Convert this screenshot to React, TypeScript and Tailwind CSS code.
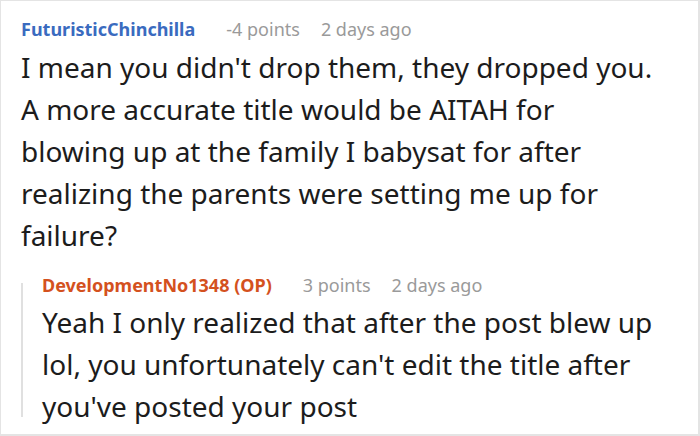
import React from 'react';

interface HeaderProps {
  author: string;
  authorColor: string;
  points: string;
  age: string;
}

const CommentHeader: React.FC<HeaderProps> = ({ author, authorColor, points, age }) => (
  <div className="flex items-baseline text-[18px] leading-[24px] whitespace-nowrap">
    <span className={`font-bold ${authorColor}`}>{author}</span>
    <span className="ml-[31px] text-[#9a9a9a]">{points}</span>
    <span className="ml-[21px] text-[#9a9a9a]">{age}</span>
  </div>
);

const CommentBody: React.FC<{ lines: string[] }> = ({ lines }) => (
  <div className="text-[28px] leading-[42px] text-[#1c1c1c]">
    {lines.map((line, i) => (
      <div key={i} className="whitespace-nowrap">{line}</div>
    ))}
  </div>
);

export default function App() {
  return (
    <div
      className="w-[700px] h-[436px] bg-white border-t border-l border-r-2 border-b-2 border-[#e4e4e4] overflow-hidden"
      style={{ fontFamily: '"Noto Sans", "Open Sans", sans-serif' }}
    >
      <div className="pl-[20px] pt-[16px]">
        <CommentHeader
          author="FuturisticChinchilla"
          authorColor="text-[#3a6bbf]"
          points="-4 points"
          age="2 days ago"
        />
        <div className="mt-[5px]">
          <CommentBody
            lines={[
              "I mean you didn't drop them, they dropped you.",
              'A more accurate title would be AITAH for',
              'blowing up at the family I babysat for after',
              'realizing the parents were setting me up for',
              'failure?',
            ]}
          />
        </div>

        {/* reply */}
        <div className="flex mt-[17px]">
          <div className="w-[2px] h-[134px] mt-[10px] bg-[#e0e0e0]" />
          <div className="pl-[19px]">
            <CommentHeader
              author="DevelopmentNo1348 (OP)"
              authorColor="text-[#d4511e]"
              points="3 points"
              age="2 days ago"
            />
            <div className="mt-[4px]">
              <CommentBody
                lines={[
                  'Yeah I only realized that after the post blew up',
                  "lol, you unfortunately can't edit the title after",
                  "you've posted your post",
                ]}
              />
            </div>
          </div>
        </div>
      </div>
    </div>
  );
}
